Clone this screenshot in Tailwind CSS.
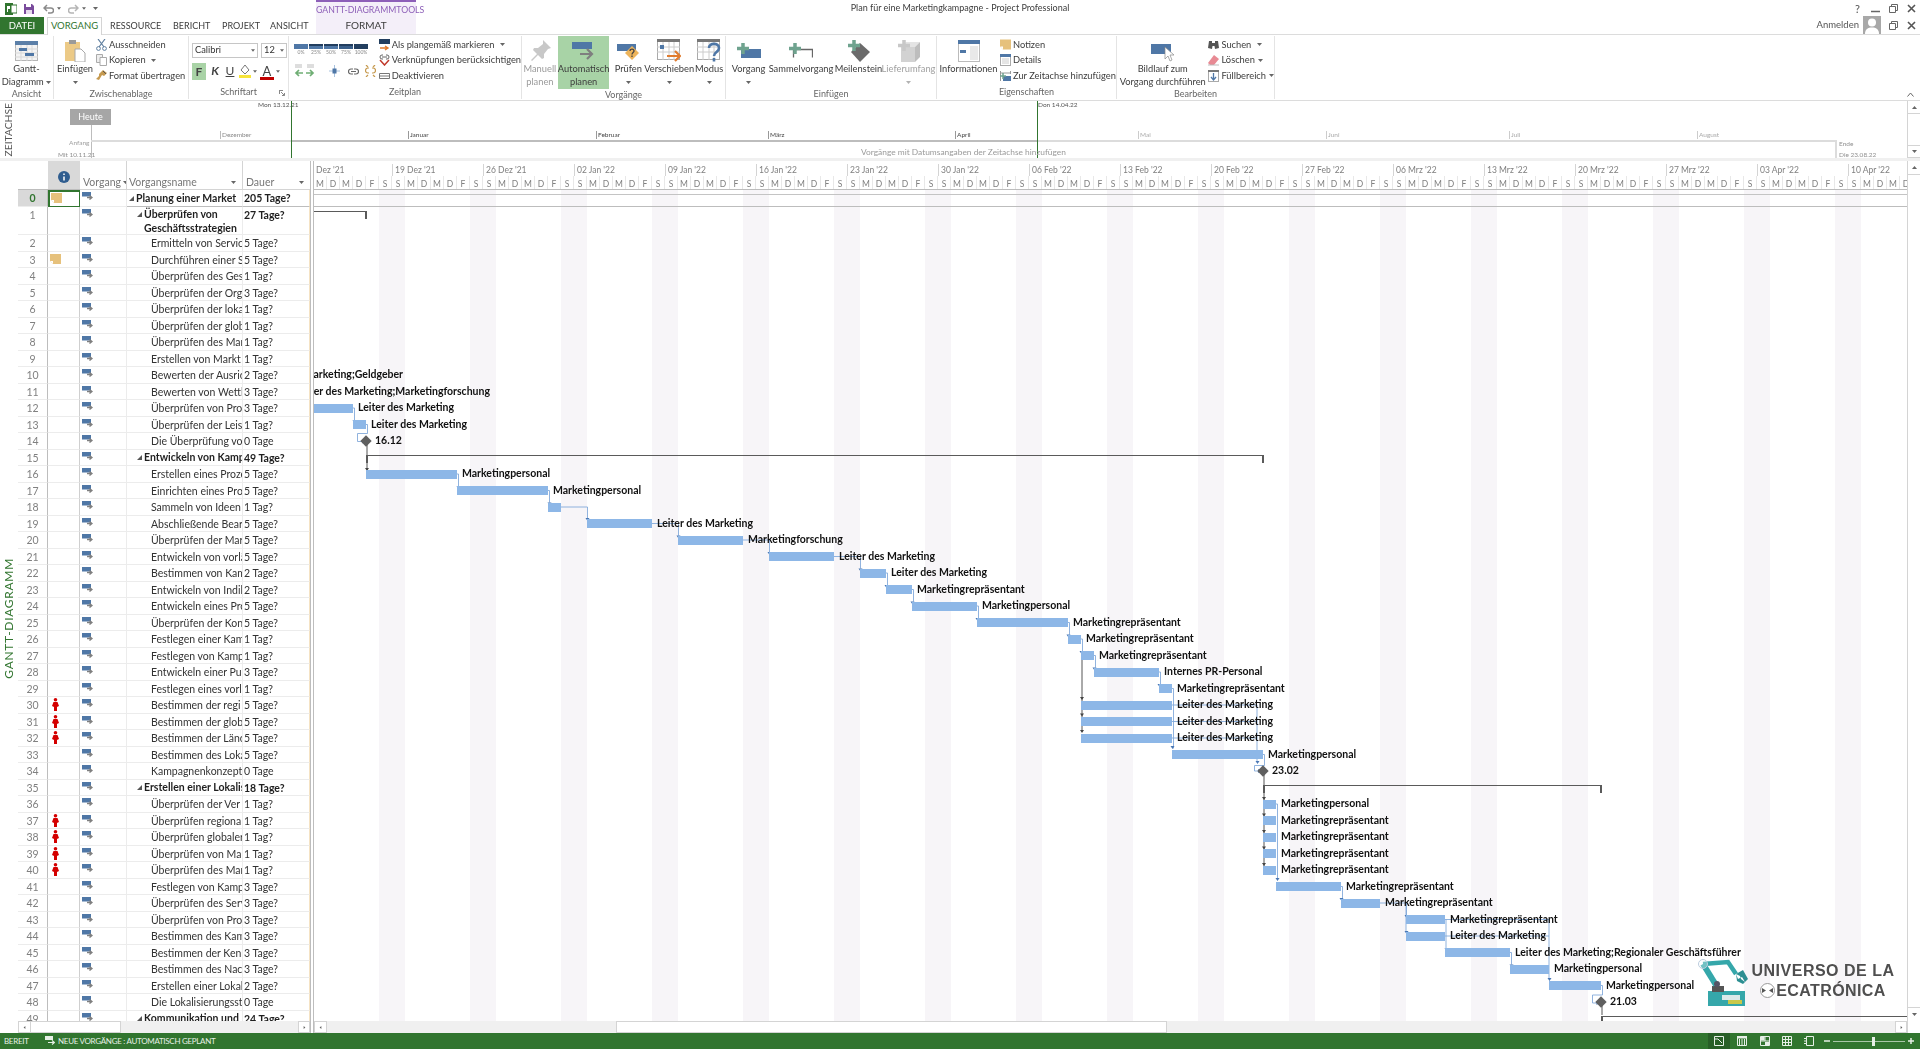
<!doctype html>
<html lang="de"><head><meta charset="utf-8"><title>Plan für eine Marketingkampagne</title>
<script src="https://cdn.jsdelivr.net/npm/@tailwindcss/browser@4"></script></head>
<body class="bg-white overflow-hidden">
<svg class="hidden"><defs>
<symbol id="m" viewBox="0 0 11 8"><rect x="0" y="0" width="9" height="4.500" fill="#4f77a6"/><path d="M5 5.500h4M7.500 3.500l2.500 2-2.500 2" fill="none" stroke="#7f7f7f" stroke-width="1.400"/></symbol>
<symbol id="d" viewBox="0 0 5 3"><path d="M0 0h5L2.500 3z" fill="#666"/></symbol>
<symbol id="n" viewBox="0 0 11 10"><path d="M0 0h11v10H3L0 7z" fill="#e6c17c"/><path d="M0 7h3v3z" fill="#fff"/></symbol>
<symbol id="p" viewBox="0 0 7 13"><circle cx="3.500" cy="1.800" r="1.800" fill="#d40000"/><path d="M1.500 4h4L7 8 5 9v4H2V9L0 8z" fill="#d40000"/></symbol>
</defs></svg>

<div class="w-[1920px] h-[1049px] flex flex-col overflow-hidden font-['Lato',sans-serif] text-[#3c3c3c] blur-[0.35px]">

<!-- title + tabs -->
<div class="flex h-[34px] shrink-0">
  <div class="w-[316px] flex flex-col">
    <div class="h-[17px] flex items-center pl-[5px]">
      <svg class="w-[12px] h-[12px]" viewBox="0 0 12 12"><rect x="0" y="0" width="8" height="12" fill="#31752f"/><rect x="6" y="2" width="6" height="8" fill="#fff" stroke="#31752f"/><path d="M2 3h3v3H3v3H2z" fill="#fff"/></svg>
      <svg class="w-[10px] h-[10px] ml-[7px]" viewBox="0 0 10 10"><path d="M0 0h8l2 2v8H0z" fill="#7a4b9c"/><rect x="2" y="0" width="5" height="3" fill="#fff"/><rect x="2" y="6" width="6" height="4" fill="#e6dced"/></svg>
      <svg class="w-[11px] h-[10px] ml-[9px]" viewBox="0 0 11 10"><path d="M2 4h6a2.500 2.500 0 0 1 0 5H5M4 1 1 4l3 3" fill="none" stroke="#8a8a8a" stroke-width="1.500"/></svg>
      <svg class="w-[4px] h-[3px] ml-[3px]"><use href="#d"/></svg>
      <svg class="w-[11px] h-[10px] ml-[7px]" viewBox="0 0 11 10"><path d="M9 4H3a2.500 2.500 0 0 0 0 5h3M7 1l3 3-3 3" fill="none" stroke="#b5b5b5" stroke-width="1.500"/></svg>
      <svg class="w-[4px] h-[3px] ml-[3px]"><use href="#d"/></svg>
      <svg class="w-[5px] h-[3px] ml-[7px]"><use href="#d"/></svg>
    </div>
    <div class="h-[17px] flex text-[9.500px] leading-[17px] text-center whitespace-nowrap">
      <div class="w-[44px] bg-[#31752f] text-white">DATEI</div>
      <div class="w-[55px] ml-[3px] bg-white border border-b-0 border-[#d4d4d4] text-[#31752f] leading-[16px] h-[18px] relative z-10">VORGANG</div>
      <div class="w-[50px] ml-[8px] text-[9px]">RESSOURCE</div>
      <div class="w-[35px] ml-[13px] text-[9px]">BERICHT</div>
      <div class="w-[35px] ml-[14px] text-[9px]">PROJEKT</div>
      <div class="w-[38px] ml-[13px] text-[9px]">ANSICHT</div>
    </div>
  </div>
  <div class="w-[100px] bg-[#f4eff9] border-t-2 border-[#8d5fb8] text-center whitespace-nowrap">
    <div class="h-[15px] leading-[16px] text-[8.700px] text-[#8d5fb8]">GANTT-DIAGRAMMTOOLS</div>
    <div class="h-[17px] leading-[17px] text-[10px]">FORMAT</div>
  </div>
  <div class="flex-1 text-center text-[9px] leading-[15px] whitespace-nowrap">Plan für eine Marketingkampagne - Project Professional</div>
  <div class="w-[416px] flex flex-col items-end text-[#555]">
    <div class="h-[17px] flex items-center pr-[4px] gap-[9px]">
      <span class="text-[11px] leading-none mr-[2px]">?</span>
      <svg class="w-[9px] h-[9px]" viewBox="0 0 9 9"><path d="M0 7.500h9" stroke="#666" stroke-width="1.500"/></svg>
      <svg class="w-[9px] h-[9px]" viewBox="0 0 9 9"><path d="M.5 2.500h6v6h-6zM2.500 2.500v-2h6v6h-2" fill="none" stroke="#666"/></svg>
      <svg class="w-[9px] h-[9px]" viewBox="0 0 9 9"><path d="M1 1l7 7M8 1 1 8" stroke="#555" stroke-width="1.600"/></svg>
    </div>
    <div class="h-[17px] flex items-center pr-[4px] whitespace-nowrap">
      <span class="text-[9.500px]">Anmelden</span>
      <svg class="w-[18px] h-[18px] ml-[4px] -mt-[1px]" viewBox="0 0 18 18"><rect width="18" height="18" fill="#a8a8a8"/><circle cx="9" cy="6.500" r="4" fill="#fff"/><path d="M2 18c0-5 3-6.500 7-6.500s7 1.500 7 6.500z" fill="#fff"/></svg>
      <svg class="w-[9px] h-[9px] ml-[8px]" viewBox="0 0 9 9"><path d="M.5 2.500h6v6h-6zM2.500 2.500v-2h6v6h-2" fill="none" stroke="#666"/></svg>
      <svg class="w-[9px] h-[9px] ml-[9px]" viewBox="0 0 9 9"><path d="M1 1l7 7M8 1 1 8" stroke="#555" stroke-width="1.600"/></svg>
    </div>
  </div>
</div>

<!-- ribbon -->
<div class="h-[67px] shrink-0 border-y border-[#dcdcdc] flex text-[9.300px] leading-[12.500px] whitespace-nowrap relative">

  <div class="w-[54px] shrink-0 border-r border-[#e4e4e4] my-[1px] flex flex-col">
    <div class="flex-1 flex flex-col items-center">
      <div class="h-[27px] flex items-center pt-[3px]"><svg class="w-[23px] h-[20px]" viewBox="0 0 23 20"><rect x=".5" y=".5" width="22" height="19" fill="#f4f4f4" stroke="#b5b5b5"/><rect width="23" height="4" fill="#5b7fa8"/><path d="M6 4v16M12 4v16M17 4v16M0 8h23M0 12h23M0 16h23" stroke="#d8d8d8"/><rect x="4" y="7" width="8" height="3" fill="#4f77a6"/><rect x="10" y="12" width="9" height="3" fill="#4f77a6"/></svg></div>
      <div class="text-center">Gantt-<br>Diagramm <svg class="inline w-[5px] h-[3px] align-middle"><use href="#d"/></svg></div>
    </div>
    <div class="h-[13px] text-center text-[9px] text-[#666]">Ansicht</div>
  </div>

  <div class="w-[135px] shrink-0 border-r border-[#e4e4e4] my-[1px] flex flex-col">
    <div class="flex-1 flex">
      <div class="w-[42px] flex flex-col items-center">
        <div class="h-[27px] flex items-center pt-[3px]"><svg class="w-[22px] h-[22px]" viewBox="0 0 22 22"><rect x="1" y="2" width="15" height="19" fill="#ecca87"/><rect x="5" y="0" width="7" height="4" fill="#9a9a9a"/><path d="M11 9h6l4 4v9H11z" fill="#fff" stroke="#a8a8a8"/></svg></div>
        <div class="text-center">Einfügen<br><svg class="inline w-[5px] h-[3px] align-middle"><use href="#d"/></svg></div>
      </div>
      <div class="flex flex-col pt-[1px]">
        <div class="h-[15.500px] flex items-center gap-[2px]"><svg class="w-[11px] h-[12px]" viewBox="0 0 11 12"><path d="M2 0l6 8M9 0 3 8" stroke="#5f7f9f" stroke-width="1.200"/><circle cx="2.500" cy="9.500" r="1.900" fill="none" stroke="#5f7f9f"/><circle cx="8.500" cy="9.500" r="1.900" fill="none" stroke="#5f7f9f"/></svg>Ausschneiden</div>
        <div class="h-[15.500px] flex items-center gap-[2px]"><svg class="w-[11px] h-[12px]" viewBox="0 0 11 12"><path d="M.5.500h6v8h-6z" fill="#eee" stroke="#aaa"/><path d="M4 3.500h6.500v8H4z" fill="#fff" stroke="#aaa"/></svg>Kopieren <svg class="w-[5px] h-[3px] ml-[3px]"><use href="#d"/></svg></div>
        <div class="h-[15.500px] flex items-center gap-[2px]"><svg class="w-[11px] h-[12px]" viewBox="0 0 11 12"><path d="M7 0l4 3-3 3-2-1-3 5L0 9l3-3V4z" fill="#c69a4f"/><path d="M7 1l3 3" stroke="#555"/></svg>Format übertragen</div>
      </div>
    </div>
    <div class="h-[13px] text-center text-[9px] text-[#666]">Zwischenablage</div>
  </div>

  <div class="w-[100px] shrink-0 border-r border-[#e4e4e4] my-[1px] flex flex-col relative">
    <div class="flex-1 pl-[3px] pt-[7px]">
      <div class="flex gap-[3px] h-[15px]">
        <div class="w-[66px] border border-[#c6c6c6] flex items-center justify-between px-[2px] text-[#333]">Calibri<svg class="w-[4px] h-[3px]"><use href="#d"/></svg></div>
        <div class="w-[26px] border border-[#c6c6c6] flex items-center justify-between px-[2px] text-[#333]">12<svg class="w-[4px] h-[3px]"><use href="#d"/></svg></div>
      </div>
      <div class="flex items-center mt-[5px] h-[17px] text-[12px] text-[#444]">
        <div class="w-[14px] h-[17px] bg-[#a9d3a6] text-center font-bold leading-[17px]">F</div>
        <div class="w-[16px] ml-[1px] text-center font-bold italic">K</div>
        <div class="w-[14px] text-center underline">U</div>
        <svg class="w-[14px] h-[15px] ml-[1px]" viewBox="0 0 14 15"><path d="M7 1l4 5-4 4-4-4z" fill="#fff" stroke="#777"/><rect x="1" y="11" width="12" height="3" fill="#f7e53b"/></svg>
        <svg class="w-[4px] h-[3px] ml-[1px]"><use href="#d"/></svg>
        <div class="relative w-[14px] h-[16px] ml-[3px] text-center leading-[14px] text-[13px]">A<div class="absolute left-0 right-0 bottom-0 h-[3px] bg-[#c00000]"></div></div>
        <svg class="w-[4px] h-[3px] ml-[2px]"><use href="#d"/></svg>
      </div>
    </div>
    <div class="h-[13px] text-center text-[9px] text-[#666]">Schriftart</div>
    <svg class="absolute right-[3px] bottom-[3px] w-[6px] h-[6px]" viewBox="0 0 6 6"><path d="M0 .5h4M.5 0v4M2 2l3.500 3.500M5.500 3v2.500H3" fill="none" stroke="#888"/></svg>
  </div>

  <div class="w-[233px] shrink-0 border-r border-[#e4e4e4] my-[1px] flex flex-col">
    <div class="flex-1 flex">
      <div class="w-[88px] pl-[5px] pt-[8px]">
        <div class="flex gap-[1px] text-[5px] leading-[6px] text-[#888] text-center">
          <div class="w-[14px]"><div class="h-[5px] bg-[#4f77a6]"></div>0%</div>
          <div class="w-[14px]"><div class="h-[5px] bg-[#4f77a6] border-t-2 border-[#223e5f]"></div>25%</div>
          <div class="w-[14px]"><div class="h-[5px] bg-[#4f77a6] border-t-2 border-[#223e5f]"></div>50%</div>
          <div class="w-[14px]"><div class="h-[5px] bg-[#3a5f8a] border-t-2 border-[#223e5f]"></div>75%</div>
          <div class="w-[14px]"><div class="h-[5px] bg-[#223e5f]"></div>100%</div>
        </div>
        <div class="flex items-center mt-[9px] gap-[6px]">
          <svg class="w-[21px] h-[14px]" viewBox="0 0 21 14"><path d="M1 1h7M1 3h7M13 1h7M13 3h7" stroke="#bcbcbc"/><path d="M9 9H2M5 6 2 9l3 3M12 9h7M16 6l3 3-3 3" fill="none" stroke="#6fae74" stroke-width="1.700"/></svg>
          <svg class="w-[11px] h-[12px] ml-[8px]" viewBox="0 0 11 12"><path d="M0 6h4M7 6h4M5.500 0v12" stroke="#a8c2df"/><rect x="3.500" y="3.500" width="4" height="5" fill="#4f77a6"/></svg>
          <svg class="w-[11px] h-[7px] ml-[2px]" viewBox="0 0 11 7"><path d="M5 1H3a2.500 2.500 0 0 0 0 5h2M6 1h2a2.500 2.500 0 0 1 0 5H6M3 3.500h5" fill="none" stroke="#666" stroke-width="1.200"/></svg>
          <svg class="w-[11px] h-[12px]" viewBox="0 0 11 12"><path d="M4 3H3a2.500 2.500 0 0 0 0 5h1M7 3h1a2.500 2.500 0 0 1 0 5H7M1 0l2 2M10 0 8 2M1 12l2-2M10 12l-2-2" fill="none" stroke="#c69a4f" stroke-width="1.200"/></svg>
        </div>
      </div>
      <div class="flex flex-col pt-[1px] pl-[2px]">
        <div class="h-[15.500px] flex items-center gap-[2px]"><svg class="w-[11px] h-[12px]" viewBox="0 0 11 12"><rect width="11" height="5" fill="#223e5f"/><path d="M1 9h7M6 7l3 2-3 2" fill="none" stroke="#e07c2f" stroke-width="1.400"/></svg>Als plangemäß markieren <svg class="w-[5px] h-[3px] ml-[4px]"><use href="#d"/></svg></div>
        <div class="h-[15.500px] flex items-center gap-[2px]"><svg class="w-[11px] h-[12px]" viewBox="0 0 11 12"><path d="M4 1H3a2 2 0 0 0 0 4h1M7 1h1a2 2 0 0 1 0 4H7M3 3h5" fill="none" stroke="#666"/><path d="M1 6l4.500 5L10 6" fill="none" stroke="#c0392b" stroke-width="1.500"/></svg>Verknüpfungen berücksichtigen</div>
        <div class="h-[15.500px] flex items-center gap-[2px]"><svg class="w-[11px] h-[12px]" viewBox="0 0 11 12"><path d="M.5 3.500h10v5H.5zM0 6h11" fill="#fff" stroke="#777"/></svg>Deaktivieren</div>
      </div>
    </div>
    <div class="h-[13px] text-center text-[9px] text-[#666]">Zeitplan</div>
  </div>

  <div class="w-[204px] shrink-0 border-r border-[#e4e4e4] my-[1px] flex flex-col">
    <div class="flex-1 flex text-center">
      <div class="w-[36px] flex flex-col items-center text-[#9a9a9a]">
        <div class="h-[27px] flex items-center pt-[3px]"><svg class="w-[22px] h-[22px]" viewBox="0 0 22 22"><path d="M14 0l8 8-3 1-4 5v4l-2 1-4-4-6 6-1-1 6-6-4-4 1-2h4l5-4z" fill="#c8c8c8"/></svg></div>
        <div>Manuell<br>planen</div>
      </div>
      <div class="w-[52px] h-[53px] bg-[#a8d3a6] flex flex-col items-center">
        <div class="h-[27px] flex items-center pt-[3px]"><svg class="w-[23px] h-[18px]" viewBox="0 0 23 18"><rect width="20" height="7" fill="#4f77a6"/><path d="M8 12h12M15 7l5 5-5 5" fill="none" stroke="#7f7f7f" stroke-width="2.200"/></svg></div>
        <div>Automatisch<br>planen</div>
      </div>
      <div class="w-[34px] ml-[2px] flex flex-col items-center">
        <div class="h-[27px] flex items-center pt-[5px]"><svg class="w-[22px] h-[18px]" viewBox="0 0 22 18"><rect y="1" width="19" height="7" fill="#4f77a6"/><path d="M15 3l7 7-7 7-7-7z" fill="#edb45b"/><path d="M13 8c0-2.500 4-2.500 4 0 0 1.500-2 1.500-2 3.500M15 12.500v1.500" fill="none" stroke="#444" stroke-width="1.300"/></svg></div>
        <div>Prüfen<br><svg class="inline w-[5px] h-[3px] align-middle"><use href="#d"/></svg></div>
      </div>
      <div class="w-[48px] flex flex-col items-center">
        <div class="h-[27px] flex items-center pt-[2px]"><svg class="w-[24px] h-[24px]" viewBox="0 0 24 24"><rect x=".5" y=".5" width="22" height="20" fill="#fff" stroke="#aaa"/><rect width="23" height="3" fill="#777"/><path d="M6 3v18M12 3v18M17 3v18M0 8h23M0 13h23" stroke="#ccc"/><rect x="3" y="6" width="4" height="4" fill="#4f77a6"/><path d="M10 17h13M18 12l5 5-5 5" fill="none" stroke="#e07c2f" stroke-width="2.200"/></svg></div>
        <div>Verschieben<br><svg class="inline w-[5px] h-[3px] align-middle"><use href="#d"/></svg></div>
      </div>
      <div class="w-[32px] flex flex-col items-center">
        <div class="h-[27px] flex items-center pt-[2px]"><svg class="w-[24px] h-[24px]" viewBox="0 0 24 24"><rect x=".5" y=".5" width="22" height="20" fill="#fff" stroke="#aaa"/><rect width="23" height="3" fill="#777"/><path d="M6 3v18M12 3v18M17 3v18M0 8h23M0 13h23" stroke="#ccc"/><path d="M12 9c0-5.500 10-5.500 10 0 0 4-5 4-5 8M17 19v3.500" fill="none" stroke="#4f77a6" stroke-width="2.600"/></svg></div>
        <div>Modus<br><svg class="inline w-[5px] h-[3px] align-middle"><use href="#d"/></svg></div>
      </div>
    </div>
    <div class="h-[13px] text-center text-[9px] text-[#666]">Vorgänge</div>
  </div>

  <div class="w-[211px] shrink-0 border-r border-[#e4e4e4] my-[1px] flex flex-col">
    <div class="flex-1 flex text-center pl-[4px]">
      <div class="w-[37px] flex flex-col items-center">
        <div class="h-[27px] flex items-center pt-[3px]"><svg class="w-[24px] h-[18px]" viewBox="0 0 24 18"><rect x="4" y="7" width="20" height="9" fill="#4f77a6"/><path d="M6 1v11M0 6.500h12" stroke="#6fa38f" stroke-width="3.500"/></svg></div>
        <div>Vorgang<br><svg class="inline w-[5px] h-[3px] align-middle"><use href="#d"/></svg></div>
      </div>
      <div class="w-[68px] flex flex-col items-center">
        <div class="h-[27px] flex items-center pt-[3px]"><svg class="w-[24px] h-[18px]" viewBox="0 0 24 18"><path d="M4 7.500h19.500v8M4.500 7.500v8" fill="none" stroke="#666" stroke-width="1.300"/><path d="M6 1v11M0 6.500h12" stroke="#6fa38f" stroke-width="3.500"/></svg></div>
        <div>Sammelvorgang</div>
      </div>
      <div class="w-[47px] flex flex-col items-center">
        <div class="h-[27px] flex items-center pt-[3px]"><svg class="w-[22px] h-[22px]" viewBox="0 0 22 22"><path d="M12 3l10 9-10 10-9-10z" fill="#6b6b6b"/><path d="M6 0v11M0 5.500h12" stroke="#6fa38f" stroke-width="3.500"/></svg></div>
        <div>Meilenstein</div>
      </div>
      <div class="w-[53px] flex flex-col items-center text-[#a0a0a0]">
        <div class="h-[27px] flex items-center pt-[3px]"><svg class="w-[22px] h-[22px]" viewBox="0 0 22 22"><path d="M3 7h14v15H3z" fill="#d2d2d2"/><path d="M3 7l5-5h14l-5 5z" fill="#e4e4e4"/><path d="M17 7l5-5v15l-5 5z" fill="#bdbdbd"/><path d="M6 0v11M0 5.500h12" stroke="#c8c8c8" stroke-width="3.500"/></svg></div>
        <div>Lieferumfang<br><svg class="inline w-[5px] h-[3px] align-middle opacity-50"><use href="#d"/></svg></div>
      </div>
    </div>
    <div class="h-[13px] text-center text-[9px] text-[#666]">Einfügen</div>
  </div>

  <div class="w-[180px] shrink-0 border-r border-[#e4e4e4] my-[1px] flex flex-col">
    <div class="flex-1 flex">
      <div class="w-[60px] pl-[3px] flex flex-col items-center">
        <div class="h-[27px] flex items-center pt-[3px]"><svg class="w-[22px] h-[22px]" viewBox="0 0 22 22"><rect x=".5" y=".5" width="21" height="21" fill="#fff" stroke="#bbb"/><rect width="22" height="4" fill="#4f77a6"/><rect x="2" y="10" width="6" height="3" fill="#4f77a6"/><rect x="12" y="6" width="8" height="14" fill="#e9e9e9"/></svg></div>
        <div>Informationen</div>
      </div>
      <div class="flex flex-col pt-[1px] pl-[3px]">
        <div class="h-[15.500px] flex items-center gap-[2px]"><svg class="w-[11px] h-[11px]"><use href="#n"/></svg>Notizen</div>
        <div class="h-[15.500px] flex items-center gap-[2px]"><svg class="w-[11px] h-[12px]" viewBox="0 0 11 12"><rect x=".5" y=".5" width="10" height="11" fill="#fff" stroke="#aaa"/><rect width="11" height="3" fill="#4f77a6"/><path d="M2 5h7M2 7h7M2 9h7" stroke="#ccc"/></svg>Details</div>
        <div class="h-[15.500px] flex items-center gap-[2px]"><svg class="w-[11px] h-[12px]" viewBox="0 0 11 12"><path d="M.5 1v10M.5 3h10M10.500 1v3" fill="none" stroke="#999"/><rect x="3" y="6" width="8" height="5" fill="#4f77a6"/><path d="M3 3v6M0 6h6" stroke="#6fa38f" stroke-width="1.500"/></svg>Zur Zeitachse hinzufügen</div>
      </div>
    </div>
    <div class="h-[13px] text-center text-[9px] text-[#666]">Eigenschaften</div>
  </div>

  <div class="w-[158px] shrink-0 border-r border-[#e4e4e4] my-[1px] flex flex-col">
    <div class="flex-1 flex">
      <div class="w-[92px] flex flex-col items-center">
        <div class="h-[27px] flex items-center pt-[6px]"><svg class="w-[24px] h-[18px]" viewBox="0 0 24 18"><rect width="20" height="10" fill="#4f77a6"/><path d="M14 3v12l3-3 2 5 2-1-2-5h4z" fill="#fff" stroke="#888" stroke-width=".7"/></svg></div>
        <div class="text-center">Bildlauf zum<br>Vorgang durchführen</div>
      </div>
      <div class="flex flex-col pt-[1px]">
        <div class="h-[15.500px] flex items-center gap-[2px]"><svg class="w-[11px] h-[12px]" viewBox="0 0 11 12"><path d="M1 2h3v2h3V2h3l1 7-4 1-.5-3h-2L4 10 0 9z" fill="#555"/></svg>Suchen <svg class="w-[5px] h-[3px] ml-[4px]"><use href="#d"/></svg></div>
        <div class="h-[15.500px] flex items-center gap-[2px]"><svg class="w-[11px] h-[12px]" viewBox="0 0 11 12"><path d="M6 1l5 4-5 6H2L0 9z" fill="#e88a94"/><path d="M0 11h11" stroke="#bbb"/></svg>Löschen <svg class="w-[5px] h-[3px] ml-[1px]"><use href="#d"/></svg></div>
        <div class="h-[15.500px] flex items-center gap-[2px]"><svg class="w-[11px] h-[12px]" viewBox="0 0 11 12"><rect x=".5" y=".5" width="10" height="11" fill="#fff" stroke="#aaa"/><rect width="11" height="2" fill="#777"/><path d="M5.500 3v6M3 7l2.500 3L8 7" fill="none" stroke="#4f77a6" stroke-width="1.300"/></svg>Füllbereich <svg class="w-[5px] h-[3px] ml-[1px]"><use href="#d"/></svg></div>
      </div>
    </div>
    <div class="h-[13px] text-center text-[9px] text-[#666]">Bearbeiten</div>
  </div>
  <svg class="absolute right-[6px] bottom-[3px] w-[7px] h-[5px]" viewBox="0 0 7 5"><path d="M.5 4.500l3-3.500 3 3.500" fill="none" stroke="#666"/></svg>
</div>

<!-- timeline -->
<div class="h-[60px] shrink-0 flex bg-[#f0f0f0] pb-[3px]">
  <div class="w-[18px] bg-white flex items-center justify-center"><span class="[writing-mode:vertical-rl] rotate-180 text-[10.300px] text-[#555] whitespace-nowrap">ZEITACHSE</span></div>
  <div class="flex-1 bg-white relative whitespace-nowrap text-[6.500px] leading-[8px] text-[#8a8a8a]">
    <div class="absolute left-[52px] top-[8px] w-[41px] h-[16px] bg-[#a6a6a6] text-white text-[9px] leading-[16px] text-center">Heute</div>
    <div class="absolute left-[73px] top-[24px] bottom-0 w-px bg-[#bdbdbd]"></div>
    <div class="absolute left-[51px] top-[38px] text-[#a0a0a0]">Anfang</div>
    <div class="absolute left-[40px] top-[50px] text-[#909090]">Mit 10.11.21</div>
    <div class="absolute left-[73px] top-[39px] w-[1745px] h-[2px] bg-[#dcdcdc]"></div>
    <div class="absolute left-[273px] top-[39px] w-[746px] h-[2px] bg-[#bdbdbd]"></div>
    <div class="absolute left-[273px] top-0 bottom-0 w-px bg-[#31752f]"></div>
    <div class="absolute left-[1019px] top-0 bottom-0 w-px bg-[#31752f]"></div>
    <div class="absolute left-[240px] top-0 text-[#555]">Mon 13.12.21</div>
    <div class="absolute left-[1020px] top-0 text-[#555]">Don 14.04.22</div>
    <div class="absolute left-[202px] top-[30px] border-l border-[#bbb] pl-[1px]">Dezember</div>
    <div class="absolute left-[390px] top-[30px] border-l border-[#999] pl-[1px] text-[#444]">Januar</div>
    <div class="absolute left-[578px] top-[30px] border-l border-[#999] pl-[1px] text-[#444]">Februar</div>
    <div class="absolute left-[750px] top-[30px] border-l border-[#999] pl-[1px] text-[#444]">März</div>
    <div class="absolute left-[937px] top-[30px] border-l border-[#999] pl-[1px] text-[#444]">April</div>
    <div class="absolute left-[1120px] top-[30px] border-l border-[#ccc] pl-[1px] text-[#aaa]">Mai</div>
    <div class="absolute left-[1308px] top-[30px] border-l border-[#ccc] pl-[1px] text-[#aaa]">Juni</div>
    <div class="absolute left-[1491px] top-[30px] border-l border-[#ccc] pl-[1px] text-[#aaa]">Juli</div>
    <div class="absolute left-[1679px] top-[30px] border-l border-[#ccc] pl-[1px] text-[#aaa]">August</div>
    <div class="absolute left-[843px] top-[45px] text-[8.400px] leading-[12px] text-[#9a9a9a]">Vorgänge mit Datumsangaben der Zeitachse hinzufügen</div>
    <div class="absolute left-[1817px] top-[39px] bottom-0 w-[2px] bg-[#dcdcdc]"></div>
    <div class="absolute left-[1821px] top-[39px] text-[#909090]">Ende</div>
    <div class="absolute left-[1821px] top-[50px] text-[#909090]">Die 23.08.22</div>
    <div class="absolute right-0 top-0 bottom-0 w-[13px] border-l border-[#d4d4d4] bg-white flex flex-col items-center justify-between">
      <div class="h-[13px] w-full border-b border-[#d4d4d4] flex items-center justify-center"><svg class="w-[5px] h-[3px] rotate-180"><use href="#d"/></svg></div>
      <div class="h-[13px] w-full border-y border-[#d4d4d4] flex items-center justify-center"><svg class="w-[5px] h-[3px]"><use href="#d"/></svg></div>
    </div>
  </div>
</div>

<!-- main -->
<div class="flex-1 flex min-h-0">
  <div class="w-[18px] shrink-0 flex items-center justify-center pt-[42px]"><span class="[writing-mode:vertical-rl] rotate-180 text-[12px] tracking-[0.7px] text-[#31752f] whitespace-nowrap">GANTT-DIAGRAMM</span></div>

  <!-- table -->
  <div class="w-[292px] shrink-0 flex flex-col text-[10.500px] leading-[16px] text-[#333]">
    <div class="h-[29px] shrink-0 flex items-end text-[#777] whitespace-nowrap">
      <div class="w-[30px] h-full border-b border-[#bdbdbd]"></div>
      <div class="w-[32px] h-full bg-[#d9d9d9] border-b border-[#bdbdbd] flex items-center justify-center"><svg class="w-[12px] h-[12px] mt-[4px]" viewBox="0 0 12 12"><circle cx="6" cy="6" r="6" fill="#2f5d8f"/><path d="M6 2.500v1.500M6 5.500v4" stroke="#fff" stroke-width="1.500"/></svg></div>
      <div class="w-[47px] h-full border-r border-b border-[#d4d4d4] flex items-center pt-[14px] pl-[3px] overflow-hidden">Vorgang<svg class="w-[5px] h-[3px] shrink-0 ml-[2px]"><use href="#d"/></svg></div>
      <div class="w-[116px] h-full border-r border-b border-[#d4d4d4] flex items-center justify-between pt-[14px] pl-[2px] pr-[6px]">Vorgangsname<svg class="w-[5px] h-[3px]"><use href="#d"/></svg></div>
      <div class="w-[67px] h-full border-b border-[#d4d4d4] flex items-center justify-between pt-[14px] pl-[3px] pr-[6px]">Dauer<svg class="w-[5px] h-[3px]"><use href="#d"/></svg></div>
    </div>
    <div class="flex-1 min-h-0 overflow-hidden">
    <div class="grid grid-cols-[30px_32px_47px_116px_67px] grid-rows-[17px_28px] auto-rows-[16.5px] [&>div]:border-b [&>div]:border-r [&>div]:border-[#ececec] [&>div]:overflow-hidden [&>div]:whitespace-nowrap [&>div:nth-child(5n+1)]:text-center [&>div:nth-child(5n+1)]:text-[#808080] [&>div:nth-child(5n+1)]:border-r-[#bdbdbd] [&>div:nth-child(5n+2)]:border-r-[#cfcfcf] [&>div:nth-child(5n+3)]:pl-[2px] [&>div:nth-child(5n+3)]:pt-[2px] [&>div:nth-child(5n+4)]:pl-[24px] [&>div:nth-child(5n)]:pl-[1px] [&>div:nth-child(5n)]:border-r-[#f5e3c4] [&_.t]:w-[11px] [&_.t]:h-[8px] [&_.t]:block [&_.i]:w-[7px] [&_.i]:h-[13px] [&_.i]:ml-[4px] [&_.i]:mt-[1px] [&_.i]:block">
<div class="!bg-[#d9d9d9] !text-[#31752f] font-bold">0</div><div class="border-2 !border-[#31752f]"><svg class="w-[11px] h-[10px] ml-[1px] mt-[1px]"><use href="#n"/></svg></div><div><svg class="t"><use href="#m"/></svg></div><div class="!pl-[2px] font-bold flex items-center !border-b-[#bdbdbd] text-[#1f1f1f]"><svg class="w-[5px] h-[5px] mr-[2px] shrink-0" viewBox="0 0 5 5"><path d="M5 0v5H0z" fill="#555"/></svg>Planung einer Market</div><div class="font-bold text-[#1f1f1f] !border-b-[#bdbdbd]">205 Tage?</div>
<div>1</div><div></div><div><svg class="t"><use href="#m"/></svg></div><div class="!pl-[10px] font-bold !whitespace-normal leading-[13.500px] text-[#1f1f1f] relative pt-[1px]"><svg class="absolute left-[10px] top-[5px] w-[5px] h-[5px]" viewBox="0 0 5 5"><path d="M5 0v5H0z" fill="#555"/></svg><span class="block pl-[7px]">Überprüfen von Geschäftsstrategien</span></div><div class="font-bold text-[#1f1f1f]">27 Tage?</div>
<div>2</div><div></div><div><svg class="t"><use href="#m"/></svg></div><div>Ermitteln von Servic</div><div>5 Tage?</div>
<div>3</div><div><svg class="w-[11px] h-[10px] ml-[2px] mt-[2px]"><use href="#n"/></svg></div><div><svg class="t"><use href="#m"/></svg></div><div>Durchführen einer S</div><div>5 Tage?</div>
<div>4</div><div></div><div><svg class="t"><use href="#m"/></svg></div><div>Überprüfen des Ges</div><div>1 Tag?</div>
<div>5</div><div></div><div><svg class="t"><use href="#m"/></svg></div><div>Überprüfen der Org</div><div>3 Tage?</div>
<div>6</div><div></div><div><svg class="t"><use href="#m"/></svg></div><div>Überprüfen der loka</div><div>1 Tag?</div>
<div>7</div><div></div><div><svg class="t"><use href="#m"/></svg></div><div>Überprüfen der glob</div><div>1 Tag?</div>
<div>8</div><div></div><div><svg class="t"><use href="#m"/></svg></div><div>Überprüfen des Mar</div><div>1 Tag?</div>
<div>9</div><div></div><div><svg class="t"><use href="#m"/></svg></div><div>Erstellen von Markt</div><div>1 Tag?</div>
<div>10</div><div></div><div><svg class="t"><use href="#m"/></svg></div><div>Bewerten der Ausric</div><div>2 Tage?</div>
<div>11</div><div></div><div><svg class="t"><use href="#m"/></svg></div><div>Bewerten von Wettl</div><div>3 Tage?</div>
<div>12</div><div></div><div><svg class="t"><use href="#m"/></svg></div><div>Überprüfen von Pro</div><div>3 Tage?</div>
<div>13</div><div></div><div><svg class="t"><use href="#m"/></svg></div><div>Überprüfen der Leis</div><div>1 Tag?</div>
<div>14</div><div></div><div><svg class="t"><use href="#m"/></svg></div><div>Die Überprüfung vo</div><div>0 Tage</div>
<div>15</div><div></div><div><svg class="t"><use href="#m"/></svg></div><div class="!pl-[10px] font-bold flex items-center text-[#1f1f1f]"><svg class="w-[5px] h-[5px] mr-[2px] shrink-0" viewBox="0 0 5 5"><path d="M5 0v5H0z" fill="#555"/></svg>Entwickeln von Kamp</div><div class="font-bold text-[#1f1f1f]">49 Tage?</div>
<div>16</div><div></div><div><svg class="t"><use href="#m"/></svg></div><div>Erstellen eines Proze</div><div>5 Tage?</div>
<div>17</div><div></div><div><svg class="t"><use href="#m"/></svg></div><div>Einrichten eines Pro</div><div>5 Tage?</div>
<div>18</div><div></div><div><svg class="t"><use href="#m"/></svg></div><div>Sammeln von Ideen</div><div>1 Tag?</div>
<div>19</div><div></div><div><svg class="t"><use href="#m"/></svg></div><div>Abschließende Bear</div><div>5 Tage?</div>
<div>20</div><div></div><div><svg class="t"><use href="#m"/></svg></div><div>Überprüfen der Mar</div><div>5 Tage?</div>
<div>21</div><div></div><div><svg class="t"><use href="#m"/></svg></div><div>Entwickeln von vorlä</div><div>5 Tage?</div>
<div>22</div><div></div><div><svg class="t"><use href="#m"/></svg></div><div>Bestimmen von Kam</div><div>2 Tage?</div>
<div>23</div><div></div><div><svg class="t"><use href="#m"/></svg></div><div>Entwickeln von Indil</div><div>2 Tage?</div>
<div>24</div><div></div><div><svg class="t"><use href="#m"/></svg></div><div>Entwickeln eines Prc</div><div>5 Tage?</div>
<div>25</div><div></div><div><svg class="t"><use href="#m"/></svg></div><div>Überprüfen der Kon</div><div>5 Tage?</div>
<div>26</div><div></div><div><svg class="t"><use href="#m"/></svg></div><div>Festlegen einer Kam</div><div>1 Tag?</div>
<div>27</div><div></div><div><svg class="t"><use href="#m"/></svg></div><div>Festlegen von Kamp</div><div>1 Tag?</div>
<div>28</div><div></div><div><svg class="t"><use href="#m"/></svg></div><div>Entwickeln einer Pul</div><div>3 Tage?</div>
<div>29</div><div></div><div><svg class="t"><use href="#m"/></svg></div><div>Festlegen eines vorl</div><div>1 Tag?</div>
<div>30</div><div><svg class="i"><use href="#p"/></svg></div><div><svg class="t"><use href="#m"/></svg></div><div>Bestimmen der regi</div><div>5 Tage?</div>
<div>31</div><div><svg class="i"><use href="#p"/></svg></div><div><svg class="t"><use href="#m"/></svg></div><div>Bestimmen der glob</div><div>5 Tage?</div>
<div>32</div><div><svg class="i"><use href="#p"/></svg></div><div><svg class="t"><use href="#m"/></svg></div><div>Bestimmen der Länc</div><div>5 Tage?</div>
<div>33</div><div></div><div><svg class="t"><use href="#m"/></svg></div><div>Bestimmen des Loka</div><div>5 Tage?</div>
<div>34</div><div></div><div><svg class="t"><use href="#m"/></svg></div><div>Kampagnenkonzept</div><div>0 Tage</div>
<div>35</div><div></div><div><svg class="t"><use href="#m"/></svg></div><div class="!pl-[10px] font-bold flex items-center text-[#1f1f1f]"><svg class="w-[5px] h-[5px] mr-[2px] shrink-0" viewBox="0 0 5 5"><path d="M5 0v5H0z" fill="#555"/></svg>Erstellen einer Lokalis</div><div class="font-bold text-[#1f1f1f]">18 Tage?</div>
<div>36</div><div></div><div><svg class="t"><use href="#m"/></svg></div><div>Überprüfen der Ver</div><div>1 Tag?</div>
<div>37</div><div><svg class="i"><use href="#p"/></svg></div><div><svg class="t"><use href="#m"/></svg></div><div>Überprüfen regiona</div><div>1 Tag?</div>
<div>38</div><div><svg class="i"><use href="#p"/></svg></div><div><svg class="t"><use href="#m"/></svg></div><div>Überprüfen globaler</div><div>1 Tag?</div>
<div>39</div><div><svg class="i"><use href="#p"/></svg></div><div><svg class="t"><use href="#m"/></svg></div><div>Überprüfen von Ma</div><div>1 Tag?</div>
<div>40</div><div><svg class="i"><use href="#p"/></svg></div><div><svg class="t"><use href="#m"/></svg></div><div>Überprüfen des Mar</div><div>1 Tag?</div>
<div>41</div><div></div><div><svg class="t"><use href="#m"/></svg></div><div>Festlegen von Kamp</div><div>3 Tage?</div>
<div>42</div><div></div><div><svg class="t"><use href="#m"/></svg></div><div>Überprüfen des Serv</div><div>3 Tage?</div>
<div>43</div><div></div><div><svg class="t"><use href="#m"/></svg></div><div>Überprüfen von Pro</div><div>3 Tage?</div>
<div>44</div><div></div><div><svg class="t"><use href="#m"/></svg></div><div>Bestimmen des Kam</div><div>3 Tage?</div>
<div>45</div><div></div><div><svg class="t"><use href="#m"/></svg></div><div>Bestimmen der Kenr</div><div>3 Tage?</div>
<div>46</div><div></div><div><svg class="t"><use href="#m"/></svg></div><div>Bestimmen des Nacl</div><div>3 Tage?</div>
<div>47</div><div></div><div><svg class="t"><use href="#m"/></svg></div><div>Erstellen einer Lokal</div><div>2 Tage?</div>
<div>48</div><div></div><div><svg class="t"><use href="#m"/></svg></div><div>Die Lokalisierungsstr</div><div>0 Tage</div>
<div>49</div><div></div><div><svg class="t"><use href="#m"/></svg></div><div class="!pl-[10px] font-bold flex items-center text-[#1f1f1f]"><svg class="w-[5px] h-[5px] mr-[2px] shrink-0" viewBox="0 0 5 5"><path d="M5 0v5H0z" fill="#555"/></svg>Kommunikation und</div><div class="font-bold text-[#1f1f1f]">24 Tage?</div>
    </div>
    </div>
    <div class="h-[12px] shrink-0 bg-[#f0f0f0] flex">
      <div class="w-[13px] bg-white border border-[#d4d4d4] flex items-center justify-center"><svg class="w-[3px] h-[5px] rotate-90"><use href="#d"/></svg></div>
      <div class="w-[90px] bg-white border-y border-r border-[#d4d4d4]"></div>
      <div class="flex-1"></div>
      <div class="w-[12px] bg-white border border-[#d4d4d4] flex items-center justify-center"><svg class="w-[3px] h-[5px] -rotate-90"><use href="#d"/></svg></div>
    </div>
  </div>

  <div class="w-[4px] shrink-0 border-x border-[#bdbdbd] bg-white"></div>

  <!-- chart -->
  <div class="w-[1593px] shrink-0 flex flex-col min-w-0">
    <div class="h-[29px] shrink-0 overflow-hidden border-b border-[#bdbdbd] text-[8.500px] text-[#808080] whitespace-nowrap">
      <div class="h-[15px] flex items-end leading-[12px] [&>div]:w-[91px] [&>div]:shrink-0 [&>div]:pl-[2px] [&>div]:border-l [&>div]:border-[#d4d4d4]">
        <div class="!w-[78px] !border-l-0">Dez '21</div><div>19 Dez '21</div><div>26 Dez '21</div><div>02 Jan '22</div><div>09 Jan '22</div><div>16 Jan '22</div><div>23 Jan '22</div><div>30 Jan '22</div><div>06 Feb '22</div><div>13 Feb '22</div><div>20 Feb '22</div><div>27 Feb '22</div><div>06 Mrz '22</div><div>13 Mrz '22</div><div>20 Mrz '22</div><div>27 Mrz '22</div><div>03 Apr '22</div><div>10 Apr '22</div>
      </div>
      <div class="h-[13px] flex leading-[16px] text-center [&>span]:w-[13px] [&>span]:shrink-0 [&>span]:border-r [&>span]:border-[#e8e8e8]"><span>M</span><span>D</span><span>M</span><span>D</span><span>F</span><span>S</span><span>S</span><span>M</span><span>D</span><span>M</span><span>D</span><span>F</span><span>S</span><span>S</span><span>M</span><span>D</span><span>M</span><span>D</span><span>F</span><span>S</span><span>S</span><span>M</span><span>D</span><span>M</span><span>D</span><span>F</span><span>S</span><span>S</span><span>M</span><span>D</span><span>M</span><span>D</span><span>F</span><span>S</span><span>S</span><span>M</span><span>D</span><span>M</span><span>D</span><span>F</span><span>S</span><span>S</span><span>M</span><span>D</span><span>M</span><span>D</span><span>F</span><span>S</span><span>S</span><span>M</span><span>D</span><span>M</span><span>D</span><span>F</span><span>S</span><span>S</span><span>M</span><span>D</span><span>M</span><span>D</span><span>F</span><span>S</span><span>S</span><span>M</span><span>D</span><span>M</span><span>D</span><span>F</span><span>S</span><span>S</span><span>M</span><span>D</span><span>M</span><span>D</span><span>F</span><span>S</span><span>S</span><span>M</span><span>D</span><span>M</span><span>D</span><span>F</span><span>S</span><span>S</span><span>M</span><span>D</span><span>M</span><span>D</span><span>F</span><span>S</span><span>S</span><span>M</span><span>D</span><span>M</span><span>D</span><span>F</span><span>S</span><span>S</span><span>M</span><span>D</span><span>M</span><span>D</span><span>F</span><span>S</span><span>S</span><span>M</span><span>D</span><span>M</span><span>D</span><span>F</span><span>S</span><span>S</span><span>M</span><span>D</span><span>M</span><span>D</span><span>F</span><span>S</span><span>S</span><span>M</span><span>D</span><span>M</span><span>D</span><span>F</span><span>S</span><span>S</span></div>
    </div>
    <div class="flex-1 min-h-0 relative overflow-hidden bg-[repeating-linear-gradient(90deg,#fff_0,#fff_65px,#f7f5f8_65px,#f7f5f8_91px)] text-[#111] text-[10.500px] leading-[16px]">
      <svg class="absolute left-0 top-0 w-[1593px] h-[831px]" viewBox="314 190 1593 831" fill="none">
        <g stroke="#7ea6d8">
          <path d="M353 408h1.500v12M366 424.500h1.500v9h-10v8h5M457 474h1.500v12M548 490.500h1.500v12M561 507h26.500v11M652 523.500h26.500v12M743 540h26.500v12M834 556.500h26.500v12M886 573h1.500v12M912 589.500h1.500v12M977 606h1.500v12M1068 622.500h1.500v12M1081 639h1.500v12M1094 655.500h1.500v12M1159 672h1.500v12M1172 688.500h1.500v60M1172 705h85M1172 721.500h85M1172 738h85M1257 705v56M1263 754.500h1.500v11h-10v5.500h4M1276 804h1.500v76M1341 886.500h1.500v12M1380 903h26.500v12M1406 903v29M1445 919.500h104M1445 936h104M1549 919.500v59M1446 919.500v29M1510 952.500h1.500v12M1601 985.500h1.500v9.500h-10v8h4" opacity=".85"/>
        </g>
        <g stroke="#555"><path d="M367 441v29M1082 655.500v43M1082 698v34M1264 771v96M1602 1003v12"/></g>
        <g fill="#4a78b5"><path d="M352.500 420h4l-2 3zM456.500 486h4l-2 3zM547.500 502.500h4l-2 3zM585.500 518h4l-2 3zM676.500 535.500h4l-2 3zM767.500 552h4l-2 3zM858.500 568.500h4l-2 3zM884.500 585h4l-2 3zM910.500 601.500h4l-2 3zM975.500 618h4l-2 3zM1066.500 634.500h4l-2 3zM1079.500 651h4l-2 3zM1092.500 667.500h4l-2 3zM1157.500 684h4l-2 3zM1170.500 746h4l-2 3zM1255.500 761h4l-2 3zM1275.500 878h4l-2 3zM1339.500 898h4l-2 3zM1404.500 915h4l-2 3zM1404.500 931h4l-2 3zM1444.500 948h4l-2 3zM1509.500 964.500h4l-2 3zM1547.500 978h4l-2 3zM362 439.500v4l3-2zM1258 769v4l3-2zM1596.500 1001v4l3-2z"/></g>
        <g fill="#444"><path d="M365 468h4l-2 3zM1080 697h4l-2 3zM1080 713.500h4l-2 3zM1080 730h4l-2 3zM1262 797h4l-2 3zM1262 813.500h4l-2 3zM1262 830h4l-2 3zM1262 846.500h4l-2 3zM1262 863h4l-2 3z"/></g>
      </svg>
      <div class="relative whitespace-nowrap [&>div]:h-[16.5px] [&>div]:flex [&>div]:items-center [&_i]:h-[9px] [&_i]:shrink-0 [&_i]:bg-[#8db7e7] [&_b]:ml-[5px] [&_b]:-mt-[2px] [&_b]:font-bold [&_.s]:h-[8px] [&_.s]:shrink-0 [&_.s]:mt-[2px] [&_.s]:border-t-[1.5px] [&_.s]:border-x-2 [&_.s]:border-[#5a5a5a] [&_.k]:w-[8px] [&_.k]:h-[8px] [&_.k]:shrink-0 [&_.k]:rotate-45 [&_.k]:bg-[#5f5f5f]">
        <div class="!h-[17px] !items-start border-b border-[#bdbdbd]"><div class="w-full mt-[4px] border-t border-[#c4c4c4]"></div></div>
        <div class="!h-[28px] !items-start"><div class="s !mt-[4px]" style="width:53px;border-left:0"></div></div>
        <div></div><div></div><div></div><div></div><div></div><div></div><div></div><div></div>
        <div class="!w-[89px] justify-end"><b class="!ml-0">Leiter des Marketing;Geldgeber</b></div>
        <div class="!w-[176px] justify-end"><b class="!ml-0">Leiter des Marketing;Marketingforschung</b></div>
        <div><i style="width:39px"></i><b>Leiter des Marketing</b></div>
        <div><i style="margin-left:39px;width:13px"></i><b>Leiter des Marketing</b></div>
        <div><span class="k" style="margin-left:48px"></span><b class="!ml-[5px]">16.12</b></div>
        <div><div class="s" style="margin-left:52px;width:898px"></div></div>
        <div><i style="margin-left:52px;width:91px"></i><b>Marketingpersonal</b></div>
        <div><i style="margin-left:143px;width:91px"></i><b>Marketingpersonal</b></div>
        <div><i style="margin-left:234px;width:13px"></i></div>
        <div><i style="margin-left:273px;width:65px"></i><b>Leiter des Marketing</b></div>
        <div><i style="margin-left:364px;width:65px"></i><b>Marketingforschung</b></div>
        <div><i style="margin-left:455px;width:65px"></i><b>Leiter des Marketing</b></div>
        <div><i style="margin-left:546px;width:26px"></i><b>Leiter des Marketing</b></div>
        <div><i style="margin-left:572px;width:26px"></i><b>Marketingrepräsentant</b></div>
        <div><i style="margin-left:598px;width:65px"></i><b>Marketingpersonal</b></div>
        <div><i style="margin-left:663px;width:91px"></i><b>Marketingrepräsentant</b></div>
        <div><i style="margin-left:754px;width:13px"></i><b>Marketingrepräsentant</b></div>
        <div><i style="margin-left:767px;width:13px"></i><b>Marketingrepräsentant</b></div>
        <div><i style="margin-left:780px;width:65px"></i><b>Internes PR-Personal</b></div>
        <div><i style="margin-left:845px;width:13px"></i><b>Marketingrepräsentant</b></div>
        <div><i style="margin-left:767px;width:91px"></i><b>Leiter des Marketing</b></div>
        <div><i style="margin-left:767px;width:91px"></i><b>Leiter des Marketing</b></div>
        <div><i style="margin-left:767px;width:91px"></i><b>Leiter des Marketing</b></div>
        <div><i style="margin-left:858px;width:91px"></i><b>Marketingpersonal</b></div>
        <div><span class="k" style="margin-left:945px"></span><b class="!ml-[5px]">23.02</b></div>
        <div><div class="s" style="margin-left:949px;width:339px"></div></div>
        <div><i style="margin-left:949px;width:13px"></i><b>Marketingpersonal</b></div>
        <div><i style="margin-left:949px;width:13px"></i><b>Marketingrepräsentant</b></div>
        <div><i style="margin-left:949px;width:13px"></i><b>Marketingrepräsentant</b></div>
        <div><i style="margin-left:949px;width:13px"></i><b>Marketingrepräsentant</b></div>
        <div><i style="margin-left:949px;width:13px"></i><b>Marketingrepräsentant</b></div>
        <div><i style="margin-left:962px;width:65px"></i><b>Marketingrepräsentant</b></div>
        <div><i style="margin-left:1027px;width:39px"></i><b>Marketingrepräsentant</b></div>
        <div><i style="margin-left:1092px;width:39px"></i><b>Marketingrepräsentant</b></div>
        <div><i style="margin-left:1092px;width:39px"></i><b>Leiter des Marketing</b></div>
        <div><i style="margin-left:1131px;width:65px"></i><b>Leiter des Marketing;Regionaler Geschäftsführer</b></div>
        <div><i style="margin-left:1196px;width:39px"></i><b>Marketingpersonal</b></div>
        <div><i style="margin-left:1235px;width:52px"></i><b>Marketingpersonal</b></div>
        <div><span class="k" style="margin-left:1283px"></span><b class="!ml-[5px]">21.03</b></div>
        <div><div class="s" style="margin-left:1287px;width:330px"></div></div>
      </div>
      <!-- watermark -->
      <div class="absolute left-[1384px] top-[768px] flex items-center text-[#4f4f4f] font-['Liberation_Sans',sans-serif] font-bold">
        <svg class="w-[52px] h-[48px] shrink-0" viewBox="0 0 52 48" fill="none">
          <rect x="10" y="33" width="37" height="15" fill="#35a7aa"/>
          <rect x="24" y="37" width="18" height="5" fill="#dce9e9"/>
          <rect x="30" y="42" width="14" height="4" fill="#c8c84a"/>
          <rect x="14" y="28" width="12" height="6" fill="#555"/>
          <path d="M18 27 5 6" stroke="#35a7aa" stroke-width="6"/>
          <path d="M5 6 30 4l8 12" stroke="#35a7aa" stroke-width="4.500"/>
          <circle cx="5" cy="6" r="4.500" stroke="#bcd" fill="#fff" fill-opacity=".3"/>
          <circle cx="19" cy="26" r="3" fill="#556"/>
          <path d="M38 16l7-4 5 9-3 3-3-5-4 2zM38 16l1 7 6 3 2-2-4-3-1-3z" fill="#2d8f92"/>
        </svg>
        <div class="w-[146px] shrink-0 text-center leading-[20px] whitespace-nowrap -mt-[3px]">
          <div class="text-[16px] tracking-[0.5px]">UNIVERSO DE LA</div>
          <div class="text-[16px] tracking-[0.4px] flex items-center justify-center"><svg class="w-[15px] h-[15px] mr-[1px]" viewBox="0 0 15 15"><circle cx="7.500" cy="7.500" r="7" fill="#fff" stroke="#999"/><path d="M2 5l4 2.500L2 10zM13 5 9 7.500l4 2.500z" fill="#555"/></svg>ECATRÓNICA</div>
        </div>
      </div>
    </div>
    <div class="h-[12px] shrink-0 bg-[#f0f0f0] flex">
      <div class="w-[13px] bg-white border border-[#d4d4d4] flex items-center justify-center"><svg class="w-[3px] h-[5px] rotate-90"><use href="#d"/></svg></div>
      <div class="w-[289px]"></div>
      <div class="w-[551px] bg-white border-x border-y border-[#d4d4d4]"></div>
      <div class="flex-1"></div>
      <div class="w-[12px] bg-white border border-[#d4d4d4] flex items-center justify-center"><svg class="w-[3px] h-[5px] -rotate-90"><use href="#d"/></svg></div>
    </div>
  </div>

  <div class="w-[13px] shrink-0 border-l border-[#d4d4d4] flex flex-col items-center justify-between pb-[12px]">
    <div class="h-[14px] w-full border-b border-[#d4d4d4] flex items-center justify-center"><svg class="w-[5px] h-[3px] rotate-180"><use href="#d"/></svg></div>
    <div class="h-[14px] w-full border-t border-[#d4d4d4] flex items-center justify-center"><svg class="w-[5px] h-[3px]"><use href="#d"/></svg></div>
  </div>
</div>

<!-- status bar -->
<div class="h-[16px] shrink-0 bg-[#31752f] text-[#e6efe6] text-[8px] tracking-[-0.3px] leading-[16px] flex items-center whitespace-nowrap">
  <span class="pl-[4px] w-[45px]">BEREIT</span>
  <svg class="w-[10px] h-[10px]" viewBox="0 0 10 10"><rect x="0" y="0" width="8" height="4" fill="#e6efe6"/><path d="M3 6.500h6M7 4.500l2.500 2-2.500 2" fill="none" stroke="#e6efe6" stroke-width="1.200"/></svg>
  <span class="ml-[3px]">NEUE VORGÄNGE : AUTOMATISCH GEPLANT</span>
  <div class="ml-auto flex items-center h-full pr-[6px]">
    <div class="w-[22px] h-full bg-[#285f27] flex items-center justify-center"><svg class="w-[10px] h-[10px]" viewBox="0 0 10 10"><path d="M.5.500h9v9h-9zM1 3l3 0 4 4" fill="none" stroke="#e6efe6"/></svg></div>
    <svg class="w-[10px] h-[10px] ml-[7px]" viewBox="0 0 10 10"><path d="M.5.500h9v9h-9zM2.500 3v6M5 3v6M7.500 3v6" fill="none" stroke="#e6efe6"/><rect width="10" height="2.500" fill="#e6efe6"/></svg>
    <svg class="w-[10px] h-[10px] ml-[13px]" viewBox="0 0 10 10"><path d="M.5.500h9v9h-9zM0 5h10M5 0v5" fill="none" stroke="#e6efe6"/><rect x="1" y="1" width="3.500" height="3.500" fill="#e6efe6"/><rect x="5" y="6" width="4" height="3" fill="#e6efe6"/></svg>
    <svg class="w-[10px] h-[10px] ml-[12px]" viewBox="0 0 10 10"><path d="M.5.500h9v9h-9zM3.500 0v10M6.500 0v10M0 3.500h10M0 6.500h10" fill="none" stroke="#e6efe6"/></svg>
    <svg class="w-[10px] h-[10px] ml-[12px]" viewBox="0 0 10 10"><path d="M2.500.500h7v9h-7zM0 2.500h2.500M0 5h2.500M0 7.500h2.500" fill="none" stroke="#e6efe6"/></svg>
    <svg class="w-[6px] h-[6px] ml-[10px]" viewBox="0 0 6 6"><path d="M0 3h6" stroke="#e6efe6" stroke-width="1.500"/></svg>
    <div class="w-[72px] h-px bg-[#a9c6a8] mx-[3px] relative"><div class="absolute left-[39px] -top-[4px] w-[3px] h-[9px] bg-[#e6efe6]"></div></div>
    <svg class="w-[6px] h-[6px]" viewBox="0 0 6 6"><path d="M0 3h6M3 0v6" stroke="#e6efe6" stroke-width="1.500"/></svg>
  </div>
</div>
</div>
</body></html>
